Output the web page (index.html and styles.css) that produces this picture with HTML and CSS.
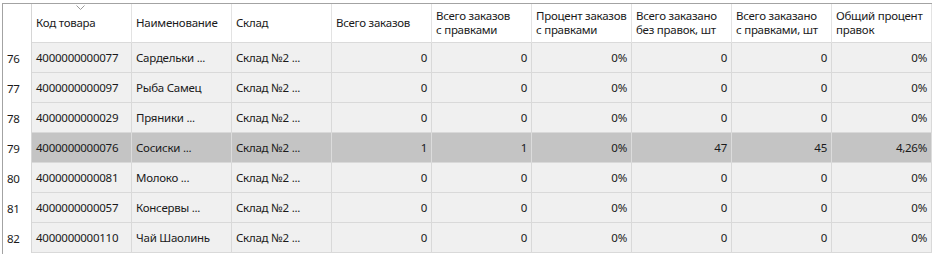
FILE: index.html
```html
<!DOCTYPE html>
<html lang="ru">
<head>
<meta charset="utf-8">
<link rel="stylesheet" href="styles.css">
</head>
<body>
<div class="grid">
  <div class="rn hd"></div>
  <div class="hc sorted"><svg class="sort" width="9" height="5" viewBox="0 0 9 5"><path d="M0.5 0.5 L4.5 4.5 L8.5 0.5" fill="none" stroke="#9a9a9a" stroke-width="1"/></svg>Код товара</div>
  <div class="hc">Наименование</div>
  <div class="hc">Склад</div>
  <div class="hc">Всего заказов</div>
  <div class="hc">Всего заказов<br>с правками</div>
  <div class="hc">Процент заказов<br>с правками</div>
  <div class="hc">Всего заказано<br>без правок, шт</div>
  <div class="hc">Всего заказано<br>с правками, шт</div>
  <div class="hc">Общий процент<br>правок</div>

  <div class="rn">76</div><div class="c">4000000000077</div><div class="c">Сардельки ...</div><div class="c">Склад №2 ...</div><div class="c n">0</div><div class="c n">0</div><div class="c n">0%</div><div class="c n">0</div><div class="c n">0</div><div class="c n">0%</div>
  <div class="rn">77</div><div class="c">4000000000097</div><div class="c">Рыба Самец</div><div class="c">Склад №2 ...</div><div class="c n">0</div><div class="c n">0</div><div class="c n">0%</div><div class="c n">0</div><div class="c n">0</div><div class="c n">0%</div>
  <div class="rn">78</div><div class="c">4000000000029</div><div class="c">Пряники ...</div><div class="c">Склад №2 ...</div><div class="c n">0</div><div class="c n">0</div><div class="c n">0%</div><div class="c n">0</div><div class="c n">0</div><div class="c n">0%</div>
  <div class="rn">79</div><div class="c sel">4000000000076</div><div class="c sel">Сосиски ...</div><div class="c sel">Склад №2 ...</div><div class="c sel n">1</div><div class="c sel n">1</div><div class="c sel n">0%</div><div class="c sel n">47</div><div class="c sel n">45</div><div class="c sel n">4,26%</div>
  <div class="rn">80</div><div class="c">4000000000081</div><div class="c">Молоко ...</div><div class="c">Склад №2 ...</div><div class="c n">0</div><div class="c n">0</div><div class="c n">0%</div><div class="c n">0</div><div class="c n">0</div><div class="c n">0%</div>
  <div class="rn">81</div><div class="c">4000000000057</div><div class="c">Консервы ...</div><div class="c">Склад №2 ...</div><div class="c n">0</div><div class="c n">0</div><div class="c n">0%</div><div class="c n">0</div><div class="c n">0</div><div class="c n">0%</div>
  <div class="rn">82</div><div class="c">4000000000110</div><div class="c">Чай Шаолинь</div><div class="c">Склад №2 ...</div><div class="c n">0</div><div class="c n">0</div><div class="c n">0%</div><div class="c n">0</div><div class="c n">0</div><div class="c n">0%</div>
</div>
</body>
</html>
```
FILE: styles.css
```css
html, body {
  margin: 0;
  padding: 0;
  background: #ffffff;
}
body {
  font-family: "Noto Sans", "Open Sans", sans-serif;
  font-size: 11.5px;
  letter-spacing: -0.25px;
  color: #1a1a1a;
  height: 254px;
  overflow: hidden;
}
.grid {
  margin: 3px 0 0 2px;
  border-left: 1px solid #a3a3a3;
  border-top: 1px solid #a3a3a3;
  display: grid;
  grid-template-columns: 29px repeat(9, 100px);
  grid-template-rows: 39px repeat(7, 30px);
  width: 929px;
  height: 250px;
}
.rn {
  background: #ffffff;
  border-right: 1px solid #d6d6d6;
  display: flex;
  align-items: center;
  padding-left: 4px;
}
.hc {
  position: relative;
  background: #ffffff;
  border-right: 1px solid #e3e3e3;
  border-bottom: 1px solid #dadada;
  display: flex;
  align-items: center;
  padding-left: 4px;
  line-height: 14px;
  white-space: nowrap;
  overflow: hidden;
}
.sort {
  position: absolute;
  top: 1px;
  left: 44px;
}
.c {
  background: #f0f0f0;
  border-right: 1px solid #d9d9d9;
  border-bottom: 1px solid #d9d9d9;
  display: flex;
  align-items: center;
  padding: 0 4px;
  white-space: nowrap;
  overflow: hidden;
}
.c.n {
  justify-content: flex-end;
}
.c.sel {
  background: #c4c4c4;
  border-right-color: #dcdcdc;
}
```
